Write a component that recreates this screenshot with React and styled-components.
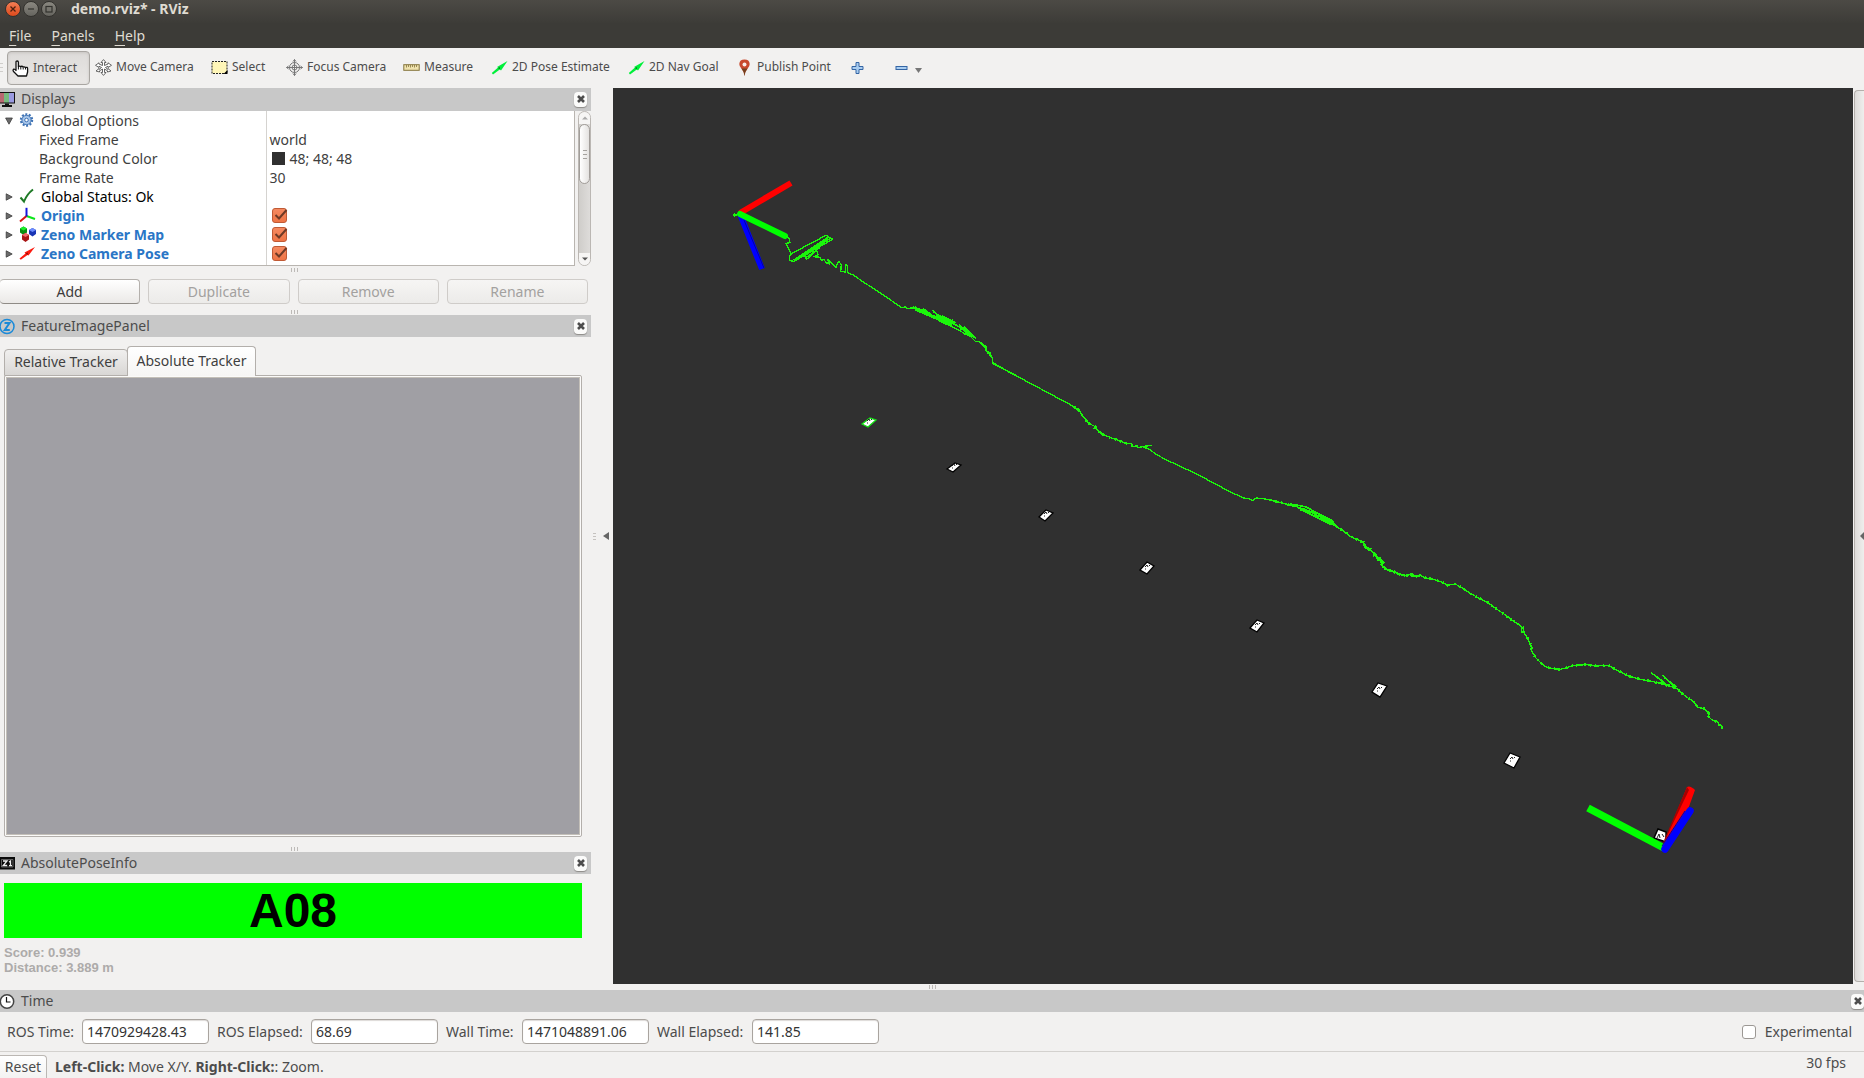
import React, { useState } from "react";
import styled, { createGlobalStyle, css } from "styled-components";

const Global = createGlobalStyle`
  * { box-sizing: border-box; }
  html, body, #root { height: 100%; margin: 0; }
  body {
    background: #f2f1f0;
    color: #4c4c4c;
    font: 14px/18px "Noto Sans", "Open Sans", sans-serif;
    overflow: hidden;
  }
  button, input { font: inherit; color: inherit; }
`;

const Window = styled.div`
  display: flex;
  flex-direction: column;
  height: 100vh;
`;

const TopBars = styled.header`
  height: 48px;
  background: linear-gradient(#4c4a45, #3c3b37 24px);
  color: #dfdbd2;
`;
const TitleBar = styled.div`
  display: flex;
  align-items: center;
  height: 18px;
  padding-left: 5px;
`;
const Title = styled.h1`
  margin: 0 0 0 12px;
  font-size: 14px;
  line-height: 18px;
  font-weight: 700;
`;
const WindowButton = styled.button`
  width: 16px;
  height: 16px;
  margin-right: 2px;
  padding: 0;
  border: 1px solid #33322e;
  border-radius: 50%;
  background: ${(p) => (p.$close ? "linear-gradient(#f37e55, #dd4a1c)" : "linear-gradient(#8a8880, #66655f)")};
  svg { display: block; width: 14px; height: 14px; }
`;
const MenuBar = styled.nav`
  display: flex;
  gap: 20px;
  height: 30px;
  padding: 9px 9px 0;
`;
const MenuButton = styled.button`
  align-self: flex-start;
  padding: 0;
  border: 0;
  background: none;
  line-height: 18px;
  u { text-underline-offset: 4px; }
`;

const Toolbar = styled.div`
  display: flex;
  align-items: center;
  height: 40px;
  flex: none;
  padding: 0 0 2px;
  font-size: 12px;
`;
const ToolGrip = styled.span`
  width: 3px;
  height: 9px;
  margin-right: 4px;
  background: repeating-linear-gradient(#cfcdca 0 1px, transparent 1px 4px);
`;
const Tool = styled.button`
  display: flex;
  align-items: center;
  justify-content: flex-start;
  gap: 4px;
  height: 34px;
  padding: 0 4px;
  width: ${(p) => p.$w}px;
  flex: none;
  white-space: nowrap;
  border: 1px solid transparent;
  border-radius: 4px;
  background: none;
  svg { width: 17px; height: 17px; flex: none; }
  ${(p) =>
    p.$active &&
    css`
      border-color: #a9a6a2;
      background: linear-gradient(#dddbd9, #e9e7e5);
      box-shadow: inset 0 1px 3px #c8c5c2;
      margin-top: 2px;
    `}
`;

const Main = styled.main`
  display: flex;
  flex: 1;
  min-height: 0;
`;
const Dock = styled.aside`
  display: flex;
  flex-direction: column;
  width: 591px;
  flex: none;
`;
const PanelHeader = styled.div`
  display: flex;
  align-items: center;
  flex: none;
  height: ${(p) => (p.$tall ? 23 : 22)}px;
  padding-right: ${(p) => (p.$edge ? 0 : 4)}px;
  padding-bottom: ${(p) => (p.$tall ? 1 : 0)}px;
  background: #c8c8c8;
  > svg { width: 15px; height: 18px; flex: none; }
  h2 {
    flex: 1;
    margin: 0 0 0 6px;
    font-size: 14px;
    line-height: 20px;
    font-weight: 400;
  }
`;
const CloseButton = styled.button`
  width: 13px;
  height: 15px;
  padding: 0;
  border: 0;
  border-radius: 4px;
  background: #fbfbfa;
  box-shadow: 0 1px 1px #8d8b88;
  svg { display: block; margin: auto; }
`;

const TreeArea = styled.div`
  display: flex;
  flex: none;
  height: 155px;
`;
const Tree = styled.div`
  flex: 1;
  overflow: hidden;
  background: #fff;
  border-right: 1px solid #b9b5b0;
  border-bottom: 1px solid #b9b5b0;
`;
const TreeTable = styled.table`
  width: 100%;
  border-collapse: collapse;
  table-layout: fixed;
  td {
    height: 19px;
    padding: 0;
    line-height: 19px;
    vertical-align: top;
  }
  td + td {
    border-left: 1px solid #d5d3d0;
    padding-left: 3px;
  }
  tr:last-child td { height: 22px; }
`;
const NameCell = styled.div`
  display: flex;
  align-items: center;
  height: 19px;
  padding-left: ${(p) => (p.$child ? 39 : 5)}px;
  white-space: nowrap;
  color: ${(p) => (p.$tone === "link" ? "#2a76c6" : p.$tone === "dark" ? "#000" : "#3f3f3f")};
  font-weight: ${(p) => (p.$tone === "link" ? 700 : 400)};
  > svg:nth-of-type(1) { width: 8px; height: 8px; margin-right: 6px; }
  > svg:nth-of-type(2) { width: 17px; height: 17px; margin-right: 5px; }
`;
const ValueCell = styled.div`
  display: flex;
  align-items: center;
  gap: 5px;
  height: 19px;
  padding-left: ${(p) => (p.$icon ? 2 : 0)}px;
  color: #3f3f3f;
`;
const Swatch = styled.span`
  width: 13px;
  height: 13px;
  background: #303030;
`;
const TreeCheck = styled.input`
  appearance: none;
  width: 15px;
  height: 15px;
  margin: 0;
  border: 1px solid #c05a35;
  border-radius: 3px;
  background: #fff;
  &:checked { background: linear-gradient(#f58a61, #ee7445); }
`;
const CheckWrap = styled.label`
  position: relative;
  display: flex;
  svg {
    position: absolute;
    left: 1px;
    top: 0;
    width: 15px;
    height: 14px;
    pointer-events: none;
  }
`;

const ScrollBar = styled.div`
  display: flex;
  flex-direction: column;
  width: 13px;
  margin-left: 3px;
  border: 1px solid #bbb7b3;
  border-radius: 7px;
  background: linear-gradient(90deg, #cfcdca, #dedcda);
  overflow: hidden;
`;
const ScrollStep = styled.button`
  height: 12px;
  padding: 0;
  border: 0;
  background: #f6f5f4;
  svg { display: block; margin: auto; }
`;
const ScrollThumb = styled.div`
  height: 60px;
  display: grid;
  place-items: center;
  border: 1px solid #a19d99;
  border-radius: 6px;
  background: linear-gradient(90deg, #fff, #e4e2e0);
`;
const ScrollGrip = styled.span`
  width: 4px;
  height: 9px;
  background: repeating-linear-gradient(#a5a29e 0 1px, transparent 1px 4px);
`;
const ScrollTrack = styled.div`
  flex: 1;
`;

const Splitter = styled.div`
  display: flex;
  justify-content: center;
  align-items: ${(p) => (p.$end ? "flex-end" : "center")};
  flex: none;
  height: ${(p) => p.$h}px;
  padding-bottom: ${(p) => (p.$end ? 1 : 0)}px;
  padding-right: ${(p) => (p.$docked ? 3 : 0)}px;
  &::after {
    content: "";
    width: 7px;
    height: 4px;
    background: repeating-linear-gradient(90deg, #bdbab7 0 1px, transparent 1px 3px);
  }
`;
const ButtonRow = styled.div`
  display: flex;
  gap: 8px;
  flex: none;
  padding: 6px 3px 5px 0;
`;
const PushButton = styled.button`
  flex: 1;
  height: 25px;
  padding: 0;
  border: 1px solid #b4b0ac;
  border-bottom-color: #8f8b86;
  border-radius: 4px;
  background: linear-gradient(#fff, #ebe9e7);
  color: #3c3c3c;
  &:first-child { border-left: 0; }
  &:disabled {
    border-color: #cfccc9;
    background: linear-gradient(#f6f5f4, #ecebe9);
    color: #a3a19f;
  }
`;

const TabPanel = styled.section`
  display: flex;
  flex-direction: column;
  flex: 1;
  min-height: 0;
  padding: 9px 9px 0 4px;
`;
const TabList = styled.div`
  display: flex;
  align-items: flex-end;
  height: 30px;
  margin-bottom: -1px;
`;
const Tab = styled.button`
  height: ${(p) => (p.$active ? 30 : 27)}px;
  width: ${(p) => (p.$active ? 129 : 124)}px;
  margin-right: -1px;
  padding: 0 0 1px;
  white-space: nowrap;
  border: 1px solid #b3afab;
  border-bottom: ${(p) => (p.$active ? "0" : "1px solid #b3afab")};
  border-radius: 4px 4px 0 0;
  background: ${(p) => (p.$active ? "linear-gradient(#fff, #f6f5f4)" : "linear-gradient(#f0efee, #d9d7d5)")};
  color: #3f3f3f;
  z-index: ${(p) => (p.$active ? 1 : 0)};
`;
const Pane = styled.div`
  flex: 1;
  min-height: 0;
  padding: 1px;
  border: 1px solid #b3afab;
  border-radius: 2px;
  background: #fbfaf9;
`;
const FeatureImage = styled.div`
  height: 100%;
  border: 1px solid #c3bfb8;
  background: #a09fa4;
`;

const PoseInfo = styled.section`
  display: flex;
  flex-direction: column;
  flex: none;
  height: 110px;
  padding: 9px 9px 0 4px;
  font-family: "Liberation Sans", Arial, sans-serif;
  font-weight: 700;
`;
const PoseId = styled.div`
  height: 55px;
  background: #00ff00;
  color: #000;
  font-size: 48px;
  line-height: 55px;
  text-align: center;
`;
const PoseDetail = styled.p`
  margin: 7px 0 0;
  font-size: 13px;
  line-height: 15px;
  color: #adabaa;
`;

const SideHandle = styled.div`
  display: flex;
  align-items: center;
  justify-content: ${(p) => (p.$right ? "flex-end" : "flex-start")};
  gap: 7px;
  width: ${(p) => (p.$right ? 11 : 22)}px;
  padding-left: ${(p) => (p.$right ? 0 : 2)}px;
  flex: none;
  svg { display: block; }
`;
const SideButton = styled.button`
  display: flex;
  align-items: center;
  justify-content: flex-end;
  width: 10px;
  height: calc(100% - 4px);
  padding: 0;
  border: 1px solid #b3afab;
  border-right: 0;
  border-radius: 4px 0 0 4px;
  background: linear-gradient(90deg, #dddbd9, #efeeed);
`;
const GripColumn = styled.span`
  width: 3px;
  height: 7px;
  background: repeating-linear-gradient(#c5c2bf 0 1px, transparent 1px 3px);
`;
const Viewport = styled.div`
  flex: 1;
  min-width: 0;
  background: #303030;
  svg { display: block; width: 100%; height: 100%; }
`;

const TimePanel = styled.section`
  flex: none;
`;
const TimeRow = styled.div`
  display: flex;
  align-items: center;
  height: 39px;
  padding: 0 12px 0 7px;
`;
const TimeField = styled.label`
  display: flex;
  align-items: center;
  justify-content: space-between;
  width: ${(p) => p.$w}px;
  margin-right: 8px;
  white-space: nowrap;
  input {
    width: 127px;
    height: 25px;
    padding: 0 4px;
    border: 1px solid #a9a49f;
    border-radius: 4px;
    background: #fff;
    color: #333;
    box-shadow: inset 0 1px 1px #dddad8;
  }
`;
const Experimental = styled.label`
  display: flex;
  align-items: center;
  gap: 9px;
  margin-left: auto;
  input {
    appearance: none;
    width: 14px;
    height: 14px;
    margin: 0;
    border: 1px solid #9c9894;
    border-radius: 3px;
    background: #fff;
  }
`;
const StatusBar = styled.footer`
  display: flex;
  align-items: center;
  flex: none;
  height: 27px;
  border-top: 1px solid #d3d1ce;
  padding-right: 18px;
`;
const ResetButton = styled.button`
  width: 47px;
  height: 23px;
  margin-right: 8px;
  align-self: flex-end;
  padding: 0;
  border: 1px solid #bbb7b3;
  border-left: 0;
  border-bottom: 0;
  border-radius: 0 4px 0 0;
  background: linear-gradient(#fff, #f4f3f2);
`;
const Hint = styled.span`
  flex: 1;
  padding-top: 4px;
`;
const FrameRate = styled.span`
  padding-bottom: 4px;
`;

const Icons = {
  hand: (
    <svg viewBox="0 0 17 17" fill="#fff" stroke="#111" strokeWidth="1.3" strokeLinejoin="round">
      <path d="M4 10V2.2Q4 1 5.2 1T6.400 2.200V6.500Q7.500 5.600 8.700 6.600Q10 5.800 11.200 7Q12.500 6.400 13.500 7.500Q15.600 6.700 15.600 8.800V12L14.500 16H6L1.500 11.500Q.6 10 1.600 9.200Q2.800 8.800 4 10.500Z" />
      <path d="M6.400 6.500V9.500M8.800 7V9.500M11.200 7.400V9.500M13.500 8V9.500" strokeWidth="1" />
    </svg>
  ),
  move: (
    <svg viewBox="0 0 17 17" fill="#fff" stroke="#444" strokeWidth=".8">
      <path d="M8.500 .6 11 3.500H9.500V6.500L13 5V3.800L16.500 6.300 13 8.500V7.200L10.500 8.500 13 10.500V9.500L16 12 12.500 13V11.800L9.500 10V13.500H11L8.500 16.400 6 13.500H7.500V10L4.500 11.800V13L1 12 4 9.500V10.500L6.500 8.500 4 7.200V8.500L.5 6.300 4 3.800V5L7.500 6.500V3.500H6Z" />
    </svg>
  ),
  select: (
    <svg viewBox="0 0 17 17">
      <rect x="1" y="2.500" width="15" height="12" fill="#fff6b8" stroke="#222" strokeDasharray="2 1" />
      <path d="M16.500 11V15H12.500Z" />
    </svg>
  ),
  focus: (
    <svg viewBox="0 0 17 17" fill="none" stroke="#777" strokeWidth="1">
      <circle cx="8.500" cy="8.500" r="5" />
      <circle cx="8.500" cy="8.500" r="2.500" />
      <path d="M8.500 .5V16.500M.5 8.500H16.500M7 2.500 8.500 .5 10 2.500M7 14.500 8.500 16.500 10 14.500M2.500 7 .5 8.500 2.500 10M14.500 7 16.500 8.500 14.500 10" />
    </svg>
  ),
  ruler: (
    <svg viewBox="0 0 17 17" stroke="#84743c">
      <rect x=".8" y="5.700" width="15.400" height="5.600" fill="#f0e3ae" />
      <path d="M3.500 6V8.500M5.500 6V8M7.500 6V8.500M9.500 6V8M11.500 6V8.500M13.500 6V8" strokeWidth=".8" />
    </svg>
  ),
  arrow: (
    <svg viewBox="0 0 17 17">
      <path d="M.8 14 7 8.500 6 8 16.500 2 10 11.500 8.800 10.500 2 15.500Z" fill="#00f03a" />
      <path d="M7 9 9 8 8.800 10.500Z" fill="#087a20" />
    </svg>
  ),
  pin: (
    <svg viewBox="0 0 17 17">
      <path d="M8.500 17Q7.800 12 5 9 3.300 7 3.300 5 3.600.6 8.500.6T13.700 5Q13.700 7 12 9 9.200 12 8.500 17Z" fill="#c8492c" />
      <path d="M8.500 17Q7.800 12 5.500 9.500H11.500Q9.200 12 8.500 17Z" fill="#74411f" />
      <circle cx="8.500" cy="5.500" r="2" fill="#f7ece7" />
    </svg>
  ),
  plus: (
    <svg viewBox="0 0 17 17" fill="#a9cdf0" stroke="#3465a4">
      <path d="M7 3.500H10V7.500H14V10.500H10V14.500H7V10.500H3V7.500H7Z" />
    </svg>
  ),
  minus: (
    <svg viewBox="0 0 17 17" fill="#a9cdf0" stroke="#3465a4">
      <rect x="3" y="7.500" width="11" height="3" />
    </svg>
  ),
};

const Expander = ({ open }) => (
  <svg viewBox="0 0 8 8" fill="#6b6b6b" stroke="#3e3e3e" strokeWidth=".8">
    {open ? <path d="M.6 1H7.400L4 7.200Z" /> : <path d="M1.200 .8 7.200 4 1.200 7.200Z" />}
  </svg>
);

const treeIcons = {
  gear: (
    <svg viewBox="0 0 17 17" fill="none" stroke="#3f73b5">
      <circle cx="7.500" cy="8" r="5.600" strokeWidth="2.200" strokeDasharray="2 1.500" />
      <circle cx="7.500" cy="8" r="4.600" fill="#a8c6ea" />
      <circle cx="7.500" cy="8" r="1.800" fill="#fff" />
    </svg>
  ),
  tick: (
    <svg viewBox="0 0 17 17">
      <path d="M1.500 9.500 5 13.500Q8 6 14 1.500" fill="none" stroke="#1e7a26" strokeWidth="2" />
    </svg>
  ),
  axes: (
    <svg viewBox="0 0 17 17" strokeWidth="2" fill="none">
      <path d="M7.500 9 16 12" stroke="#0be61a" />
      <path d="M7.500 9 1 14.500" stroke="#d91212" />
      <path d="M7.500 9.500V.8" stroke="#1515dc" />
    </svg>
  ),
  markers: (
    <svg viewBox="0 0 17 17">
      <path d="M1 2.500 4.500 .5 8 2.500V6.500L4.500 9 1 6.500Z" fill="#0a8f10" />
      <path d="M1 2.500 4.500 .5 8 2.500 4.500 4.500Z" fill="#18f028" />
      <path d="M10 4 13.500 2 17 4V8L13.500 10.500 10 8Z" fill="#1a35b5" />
      <path d="M10 4 13.500 2 17 4 13.500 6Z" fill="#6d8dff" />
      <path d="M3 9 6.500 7 10 9V13.500L6.500 16 3 13.500Z" fill="#a81414" />
      <path d="M3 9 6.500 7 10 9 6.500 11Z" fill="#f06a6a" />
    </svg>
  ),
  pose: (
    <svg viewBox="0 0 17 17">
      <path d="M.5 13.500 6.500 8.500 5.500 7.500 16 2 9.500 10.500 8.500 10 1.800 14.800Z" fill="#fb1b10" />
      <path d="M6.500 8.500 9 7.500 8.500 10Z" fill="#8c1009" />
    </svg>
  ),
};

const panelIcons = {
  displays: (
    <svg viewBox="0 0 15 18">
      <rect x="-2" y="2" width="17" height="11.500" fill="#111" />
      <rect x="0" y="3" width="4" height="9.500" fill="#b96870" />
      <rect x="4" y="3" width="5" height="9.500" fill="#77ba7e" />
      <rect x="9" y="3" width="5" height="9.500" fill="#9a9ae0" />
      <path d="M5 13.500H9V15H12V17H2V15H5Z" fill="#111" />
    </svg>
  ),
  zeno: (
    <svg viewBox="0 0 15 18" fill="none" stroke="#1b8ad8">
      <circle cx="7" cy="9.500" r="7" strokeWidth="1.500" />
      <path d="M4.500 6H9.500L4.800 13H9.800" strokeWidth="2" />
    </svg>
  ),
  z1: (
    <svg viewBox="0 0 15 18">
      <rect y="3" width="15" height="12.500" fill="#0a0a0a" />
      <path d="M1.500 5.500H13V13H1.500Z" fill="none" stroke="#999" strokeWidth=".6" />
      <path d="M3 7H7L3.200 11.500H7.200M9 8 10.500 7V12M9 11.700H12" stroke="#eee" strokeWidth="1.300" fill="none" />
    </svg>
  ),
  clock: (
    <svg viewBox="0 0 15 18">
      <circle cx="7" cy="9.500" r="6.700" fill="#fff" stroke="#444" strokeWidth="1.500" />
      <path d="M6.500 5V10H10.500" fill="none" stroke="#111" strokeWidth="1.200" />
    </svg>
  ),
};

function Close({ label }) {
  return (
    <CloseButton aria-label={label}>
      <svg width="8" height="8" viewBox="0 0 8 8" stroke="#4d4d4d" strokeWidth="2.600">
        <path d="M1 1 7 7M7 1 1 7" />
      </svg>
    </CloseButton>
  );
}

function Header({ icon, title, ...rest }) {
  return (
    <PanelHeader {...rest}>
      {panelIcons[icon]}
      <h2>{title}</h2>
      <Close label={`Close ${title}`} />
    </PanelHeader>
  );
}

const tools = [
  { name: "Interact", icon: "hand", w: 83 },
  { name: "Move Camera", icon: "move", w: 116 },
  { name: "Select", icon: "select", w: 75 },
  { name: "Focus Camera", icon: "focus", w: 117 },
  { name: "Measure", icon: "ruler", w: 88 },
  { name: "2D Pose Estimate", icon: "arrow", w: 137 },
  { name: "2D Nav Goal", icon: "arrow", w: 108 },
  { name: "Publish Point", icon: "pin", w: 113 },
];

const rows = [
  { name: "Global Options", icon: "gear", open: true },
  { name: "Fixed Frame", child: true, value: "world" },
  { name: "Background Color", child: true, value: "48; 48; 48", swatch: true },
  { name: "Frame Rate", child: true, value: "30" },
  { name: "Global Status: Ok", icon: "tick", tone: "dark" },
  { name: "Origin", icon: "axes", tone: "link", check: true },
  { name: "Zeno Marker Map", icon: "markers", tone: "link", check: true },
  { name: "Zeno Camera Pose", icon: "pose", tone: "link", check: true },
];

const times = [
  { label: "ROS Time:", value: "1470929428.43", w: 202 },
  { label: "ROS Elapsed:", value: "68.69", w: 221 },
  { label: "Wall Time:", value: "1471048891.06", w: 203 },
  { label: "Wall Elapsed:", value: "141.85", w: 222 },
];

const markers = [
  { x: 869, y: 422, shape: "-7 2 1-4 7-2-1 5", edge: "#12e012" },
  { x: 954, y: 467, shape: "-7 2 1-4 7-2-1 5" },
  { x: 1046, y: 515, shape: "-7 2 0-5 7-2-1 6" },
  { x: 1147, y: 568, shape: "-7 2 0-6 7-2 0 6" },
  { x: 1257, y: 626, shape: "-7 2 0-6 7-3 0 6" },
  { x: 1379, y: 690, shape: "-7 2-1-7 8-4 1 7" },
  { x: 1512, y: 760, shape: "-8 3-2-7 8-3 2 8" },
];

function Marker({ x, y, shape, edge = "#000" }) {
  return (
    <g transform={`translate(${x} ${y})`}>
      <path d={`M${shape}Z`} fill="#fff" stroke={edge} strokeWidth="1.300" />
      <path d="M-2-1 0-3 1-1M2-2 3-3M-2 1H-1" fill="none" stroke="#222" strokeWidth="1" />
    </g>
  );
}

const middleNoise =
  "M282 200 298 212 308 228 326 250 346 260 352 270 370 284 400 296 440 310 452 310 460 320 470 318 474 324 484 320M870 480 950 500 1000 526 1062 556 1082 568 1098 578 1108 588 1126 596 1150 608 1154 620 1174 632 1188 646 1204 660 1210 668 1206 676 1216 686 1236 692 1262 704 1280 706 1298 702 1306 710 1320 708";
const lastLeg =
  "M0 4 10 8 18 22 32 30 46 46 58 58 66 68 68 80 84 92 102 96 120 102 134 108 150 104 160 108 180 106 198 114 214 116 232 122 246 126 262 136 286 132 310 146 330 160 360 176 384 188 408 206 432 222 450 236 476 254 490 264 490 276 500 290 512 314 516 334 526 352 544 370 560 382 580 386 600 388 624 382 640 376 680 374 710 378 746 376 770 390 806 408 840 418 876 424 900 430 926 438 948 444 968 462 984 474 1000 484 1014 502 1032 506 1046 518 1046 530 1056 540 1072 546 1078 554 1086 560V566";

function Scene() {
  return (
    <svg viewBox="613 88 1240 896" preserveAspectRatio="xMidYMid slice" role="img" aria-label="Camera trajectory">
      <g strokeWidth="6" fill="none">
        <path d="M740 214 762 269" stroke="#0000ff" />
        <path d="M764 268 744 220" stroke="#0000a8" strokeWidth="1" />
        <path d="M740 213 791 183" stroke="#ff0000" />
        <path d="M740 214 785 236" stroke="#00ff00" strokeLinecap="round" />
      </g>
      <g fill="none" stroke="#1bf60b" strokeWidth="4" strokeLinejoin="round" shapeRendering="crispEdges">
        <g transform="translate(720 160) scale(.33333)">
          <path d="M38 165H52M44 160V170M198 228 208 236 210 248 198 250 206 265 214 282 208 290 210 302 222 304 338 238 318 226 216 280M222 302 326 230M232 298 320 236M250 290 332 234M254 296 300 262M256 280 260 298 274 286M272 286 290 272 294 284 282 290 300 292 304 302 312 298 318 308 330 312 322 298 348 322 352 310 356 304 364 314 362 334 376 336 376 314 382 316 382 338 398 344 430 366 480 398 546 444 556 440 562 445 578 444 588 440" />
          <path d="M222 302 324 234" strokeWidth="8" />
          <path d="M578 440 608 450 660 484 700 502 752 530 766 544 780 546 798 560 800 574 812 582 810 588 818 596 818 608 850 626 900 653M582 444 620 460 668 476 638 452 700 502M586 450 656 480M610 446 664 486M640 456 704 494M648 472 690 490 668 468 708 488M682 476 756 528 718 494M696 478 708 498M722 510 734 500 766 534M732 498 746 520M740 516 768 536M804 576 814 578" />
          <path d="M578 442 606 452M640 470 664 482 696 498M650 464 694 488M734 520 756 528" strokeWidth="8" />
        </g>
        <g transform="translate(980 340) scale(.33333)">
          <path d="M0 8 14 20 18 32 32 44 38 56 38 70 68 86 200 156 282 200M484 320 516 316M488 320 498 324 512 330 526 342 560 360 650 402 740 450 790 474 806 476 818 482 828 474 850 476 880 482 920 492M360 280 378 288M424 304 440 312M22 40 34 42M286 206 302 214M340 266 350 262" />
          <path d={middleNoise} />
          <path d={middleNoise} strokeWidth="8" strokeDasharray="5 9 7 13 4 16" />
          <path d="M1146 604 1154 604M1160 628 1176 626M1180 648 1192 644M1192 660 1212 664" />
          <path d="M930 492 976 500 1010 518 1056 542 1070 560M940 496 1000 520 1062 552M950 502 1010 520M960 508 1050 552M970 504 990 518M1010 526 1050 540M1020 532 1060 546" strokeWidth="5" />
        </g>
        <g transform="translate(1360 540) scale(.33333)">
          <path d={lastLeg} />
          <path d={lastLeg} strokeWidth="8" strokeDasharray="5 13 4 9 6 19" />
          <path d="M28 28 36 36M42 44 56 60M60 74 72 70M114 98V104M208 118H222M452 240 464 242M484 264V280M1002 488 1008 496M1040 520 1050 522" />
          <path d="M874 398 920 436M880 402 914 428M908 406 946 444M912 412 950 440M896 426 930 436" />
        </g>
      </g>
      {markers.map((m) => (
        <Marker key={m.x} {...m} />
      ))}
      <path d="M1658 829 1666 832 1666 842 1654 838Z" fill="#fff" stroke="#000" strokeWidth="1.500" />
      <path d="M1657 838 1659 834 1660 838M1662 834 1664 837" fill="none" stroke="#222" strokeWidth="1" />
      <path d="M1687 787Q1690 785 1695 790L1687 812 1664 850 1663 845Z" fill="#ff0000" />
      <path d="M1687 787 1662 845 1664 842 1689 790Z" fill="#a80000" />
      <path d="M1588 808 1664 848" stroke="#00ff00" strokeWidth="7.500" />
      <path d="M1665 849 1690 811" stroke="#0000ff" strokeWidth="7.500" strokeLinecap="round" />
      <path d="M1662 846 1685 811" stroke="#0000a8" strokeWidth="1" />
    </svg>
  );
}

export default function App() {
  const [tool, setTool] = useState("Interact");
  const [tab, setTab] = useState("Absolute Tracker");
  return (
    <Window>
      <Global />
      <TopBars>
        <TitleBar>
          <WindowButton $close aria-label="Close">
            <svg viewBox="0 0 14 14" stroke="#4c2010" strokeWidth="1.300"><path d="M4.500 4.500 9.500 9.500M9.500 4.500 4.500 9.500" /></svg>
          </WindowButton>
          <WindowButton aria-label="Minimize">
            <svg viewBox="0 0 14 14" stroke="#33322e" strokeWidth="1.200"><path d="M4 7H10" /></svg>
          </WindowButton>
          <WindowButton aria-label="Maximize">
            <svg viewBox="0 0 14 14" fill="none" stroke="#33322e" strokeWidth="1.200"><rect x="4" y="4.500" width="6" height="5.500" /></svg>
          </WindowButton>
          <Title>demo.rviz* - RViz</Title>
        </TitleBar>
        <MenuBar>
          <MenuButton><u>F</u>ile</MenuButton>
          <MenuButton><u>P</u>anels</MenuButton>
          <MenuButton><u>H</u>elp</MenuButton>
        </MenuBar>
      </TopBars>

      <Toolbar>
        <ToolGrip />
        {tools.map((t) => (
          <Tool key={t.name} $w={t.w} $active={tool === t.name} onClick={() => setTool(t.name)}>
            {Icons[t.icon]}
            {t.name}
          </Tool>
        ))}
        <Tool $w={44} aria-label="Add tool">{Icons.plus}</Tool>
        <Tool $w={44} aria-label="Remove tool">
          {Icons.minus}
          <svg viewBox="0 0 17 17" fill="#777"><path d="M1 9H8L4.500 14Z" /></svg>
        </Tool>
      </Toolbar>

      <Main>
        <Dock>
          <Header icon="displays" title="Displays" $tall />
          <TreeArea>
            <Tree>
              <TreeTable>
                <colgroup>
                  <col style={{ width: 266 }} />
                  <col />
                </colgroup>
                <tbody>
                  {rows.map((r) => (
                    <tr key={r.name}>
                      <td>
                        <NameCell $child={r.child} $tone={r.tone}>
                          {!r.child && <Expander open={r.open} />}
                          {!r.child && treeIcons[r.icon]}
                          {r.name}
                        </NameCell>
                      </td>
                      <td>
                        <ValueCell $icon={r.swatch || r.check}>
                          {r.swatch && <Swatch />}
                          {r.check && (
                            <CheckWrap>
                              <TreeCheck type="checkbox" defaultChecked aria-label={r.name} />
                              <svg viewBox="0 0 15 14" fill="none" stroke="#6e3a26" strokeWidth="2">
                                <path d="M2.500 7 6 10.500 13.500 2" />
                              </svg>
                            </CheckWrap>
                          )}
                          {r.value}
                        </ValueCell>
                      </td>
                    </tr>
                  ))}
                </tbody>
              </TreeTable>
            </Tree>
            <ScrollBar>
              <ScrollStep aria-label="Scroll up">
                <svg width="6" height="4" viewBox="0 0 6 4" fill="#aaa"><path d="M0 3.500 3 .5 6 3.500Z" /></svg>
              </ScrollStep>
              <ScrollThumb><ScrollGrip /></ScrollThumb>
              <ScrollTrack />
              <ScrollStep aria-label="Scroll down">
                <svg width="6" height="4" viewBox="0 0 6 4" fill="#555"><path d="M0 .5H6L3 3.500Z" /></svg>
              </ScrollStep>
            </ScrollBar>
          </TreeArea>
          <Splitter $h={7} $docked />
          <ButtonRow>
            <PushButton>Add</PushButton>
            <PushButton disabled>Duplicate</PushButton>
            <PushButton disabled>Remove</PushButton>
            <PushButton disabled>Rename</PushButton>
          </ButtonRow>
          <Splitter $h={6} $docked />

          <Header icon="zeno" title="FeatureImagePanel" />
          <TabPanel>
            <TabList role="tablist">
              {["Relative Tracker", "Absolute Tracker"].map((t) => (
                <Tab key={t} role="tab" aria-selected={tab === t} $active={tab === t} onClick={() => setTab(t)}>
                  {t}
                </Tab>
              ))}
            </TabList>
            <Pane>
              <FeatureImage />
            </Pane>
          </TabPanel>
          <Splitter $h={15} $end $docked />

          <Header icon="z1" title="AbsolutePoseInfo" />
          <PoseInfo>
            <PoseId>A08</PoseId>
            <PoseDetail>
              Score: 0.939
              <br />
              Distance: 3.889 m
            </PoseDetail>
          </PoseInfo>
        </Dock>
        <SideHandle>
          <GripColumn />
          <svg width="6" height="8" viewBox="0 0 6 8" fill="#666"><path d="M6 0V8L0 4Z" /></svg>
        </SideHandle>
        <Viewport>
          <Scene />
        </Viewport>
        <SideHandle $right>
          <SideButton aria-label="Show right dock">
            <svg width="4" height="8" viewBox="0 0 4 8" fill="#666"><path d="M4 0V8L0 4Z" /></svg>
          </SideButton>
        </SideHandle>
      </Main>

      <Splitter $h={6} />
      <TimePanel>
        <Header icon="clock" title="Time" $edge />
        <TimeRow>
          {times.map((t) => (
            <TimeField key={t.label} $w={t.w}>
              {t.label}
              <input defaultValue={t.value} />
            </TimeField>
          ))}
          <Experimental>
            <input type="checkbox" />
            Experimental
          </Experimental>
        </TimeRow>
      </TimePanel>
      <StatusBar>
        <ResetButton>Reset</ResetButton>
        <Hint>
          <b>Left-Click:</b> Move X/Y. <b>Right-Click:</b>: Zoom.
        </Hint>
        <FrameRate>30 fps</FrameRate>
      </StatusBar>
    </Window>
  );
}
